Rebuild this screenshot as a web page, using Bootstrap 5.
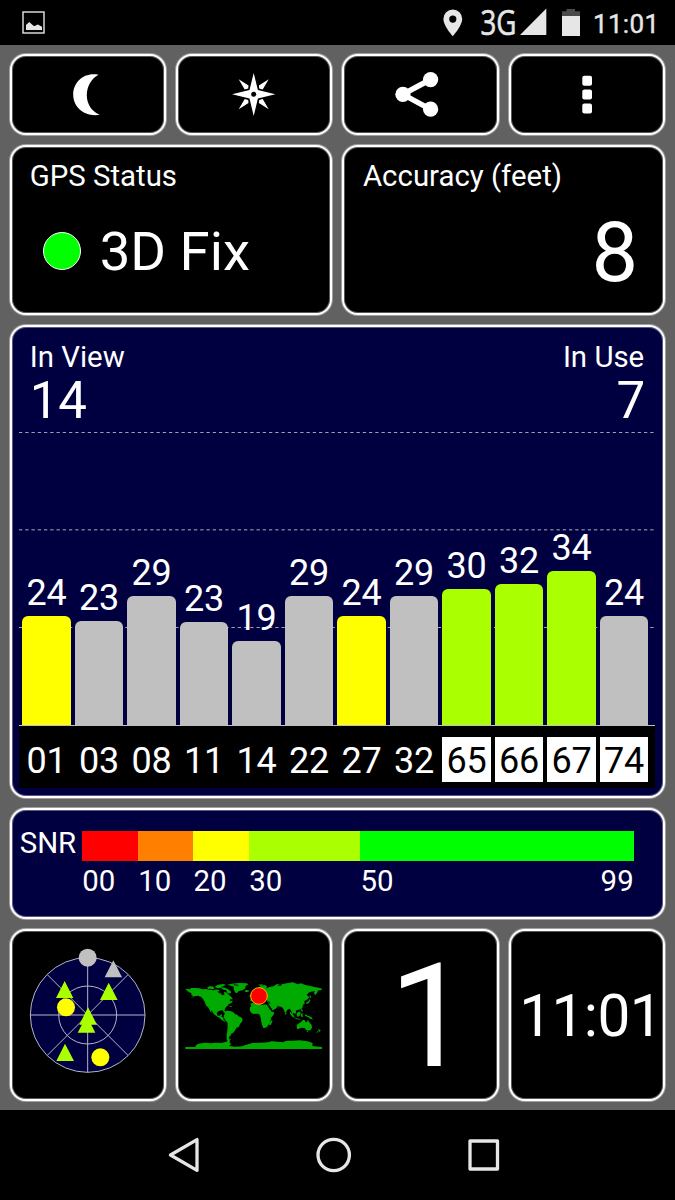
<!DOCTYPE html>
<html lang="en">
<head>
<meta charset="utf-8">
<meta name="viewport" content="width=device-width, initial-scale=1">
<title>GPS Status</title>
<link href="https://cdn.jsdelivr.net/npm/bootstrap@5.3.0/dist/css/bootstrap.min.css" rel="stylesheet">
<style>
  body { font-family: Roboto, "Liberation Sans", sans-serif; background: #000; color: #fff; height: 1200px; overflow: hidden; }
  svg { display: block; }
  .status-bar { height: 45px; }
  .panel-area { height: 1065px; padding: 9px 9.8px 0 9.7px; background: #616161; }
  .panel-area .row { --bs-gutter-x: 10px; margin-bottom: 10px; }
  .panel-area .row > * { height: 100%; }
  .tile { height: 100%; background: #000; border: 2px solid #fff; border-radius: 16px; box-shadow: 0 0 0 1px rgba(255,255,255,.4), inset 0 0 0 1px rgba(255,255,255,.35); overflow: hidden; }
  .tile-navy { background: #000040; }
  .h-tools { height: 80.5px; }
  .h-info { height: 170.5px; }
  .h-chart { height: 473px; }
  .h-snr { height: 111px; }
  .h-foot { height: 171.5px; }
  .caption-text { font-size: 29.4px; line-height: 40px; white-space: nowrap; }
  .fix-text { font-size: 54.5px; line-height: 70px; white-space: nowrap; }
  .fix-dot { width: 38px; height: 38px; border: 1.5px solid #fff; border-radius: 50%; background: #0f0; }
  .accuracy-text { font-size: 83px; line-height: 90px; padding-right: 25px; }
  .count-text { font-size: 51px; line-height: 50px; }
  .plot { height: 293px; margin: 0 8px 0 7px; }
  .plot-grid { left: 0; top: 0; }
  .bars { height: 293px; padding-left: 3.7px; gap: 4px; }
  .sat { width: 48.5px; flex: none; }
  .sat-value { font-size: 36px; line-height: 46px; }
  .sat-bar { border-radius: 6px 6px 0 0; }
  .weak { background: #c0c0c0; } .fair { background: #ff0; } .good { background: #af0; }
  .sat-names { height: 63px; margin: 0 8px 0 7px; padding: 11px 0 0 3.7px; gap: 4px; background: #000; border-top: 1px solid #c0c0c0; }
  .sat-name { width: 48.5px; height: 45px; flex: none; font-size: 36px; line-height: 48px; }
  .used { background: #fff; color: #000; }
  .snr-label { width: 62.5px; margin-left: 8px; font-size: 29.4px; line-height: 30px; margin-top: -3px; }
  .snr-scale { width: 551.5px; }
  .snr-scale > div > div { flex: none; }
  .snr-color { height: 30px; }
  .big-digit { font-size: 145px; line-height: 171px; padding-left: 18px; }
  .clock-text { font-size: 58.5px; line-height: 171px; letter-spacing: -.6px; white-space: nowrap; }
  .nav-keys { height: 90px; }
</style>
</head>
<body>
<header class="status-bar">
  <svg width="675" height="45" viewBox="0 0 675 45">
    <rect x="23" y="12" width="21" height="21" fill="none" stroke="#e6e6e6" stroke-width="1.400"/>
    <path fill="#e6e6e6" d="M26 30V25l3.200-3 4.300 3.700 1.200.2 3-1.500 4.300 2.400V30z"/>
    <path fill="#e6e6e6" fill-rule="evenodd" d="M452.800 9.500a9.400 9.400 0 0 0-9.400 9.500c0 6.800 9.400 17.200 9.400 17.200s9.400-10.400 9.400-17.200a9.400 9.400 0 0 0-9.400-9.500zm0 6a3.600 3.600 0 1 1 0 7.200 3.600 3.600 0 0 1 0-7.200z"/>
    <text x="480.500" y="35.300" font-family="Open Sans, sans-serif" font-size="34" fill="#e6e6e6" stroke="#e6e6e6" stroke-width=".6" textLength="36" lengthAdjust="spacingAndGlyphs">3G</text>
    <path fill="#e6e6e6" d="M520 35L546.300 8.500V35z"/>
    <path fill="#4a4a4a" d="M562 11.300h4.500V9h8.500v2.300h5V17h-18z"/>
    <path fill="#e6e6e6" d="M562 16h18v20h-18z"/>
    <text x="593" y="32.500" font-size="26" fill="#e6e6e6" stroke="#e6e6e6" stroke-width=".4" textLength="66">11:01</text>
  </svg>
</header>

<main class="panel-area">
  <div class="row h-tools">
    <div class="col-3"><div class="tile">
      <svg width="152" height="76" viewBox="12 56 152 76"><path fill="#fff" d="M98.500 74.700C84 71.800 73.200 82 73.200 94.500c0 13 11.800 22.800 26.500 20.300C82.500 107.500 83 83 98.500 74.700z"/></svg>
    </div></div>
    <div class="col-3"><div class="tile">
      <svg width="152" height="76" viewBox="178 56 152 76">
        <g fill="#fff">
          <path d="M253.700 73l4.200 17 17.400 4.300-17.400 4.200-4.200 17.500-4.200-17.500-17.500-4.200 17.500-4.300z"/>
          <path d="M238.700 79.300l9.800 6.200-.3 3-3.500 1zM268.700 79.300l-9.800 6.200.3 3 3.500 1zM238.700 109.300l9.800-6.200-.3-3-3.500-1zM268.700 109.300l-9.800-6.200.3-3 3.500-1z"/>
        </g>
        <circle cx="253.700" cy="94.300" r="2.500"/>
      </svg>
    </div></div>
    <div class="col-3"><div class="tile">
      <svg width="152" height="76" viewBox="344.700 56 152 76"><path d="M431.300 79.500L403.500 94.300l27.800 15" fill="none" stroke="#fff" stroke-width="5.400"/><g fill="#fff"><circle cx="431.300" cy="79.600" r="7.600"/><circle cx="403.600" cy="94.300" r="7.600"/><circle cx="431.300" cy="109.200" r="7.600"/></g></svg>
    </div></div>
    <div class="col-3"><div class="tile">
      <svg width="152" height="76" viewBox="511 56 152 76" fill="#fff"><rect x="582.300" y="75.700" width="9.700" height="10" rx="2"/><rect x="582.300" y="89.600" width="9.700" height="10" rx="2"/><rect x="582.300" y="103.600" width="9.700" height="10" rx="2"/></svg>
    </div></div>
  </div>

  <div class="row h-info">
    <div class="col-6"><div class="tile">
      <div class="caption-text" style="padding:9px 0 0 18px">GPS Status</div>
      <div class="d-flex align-items-center" style="padding:20px 0 0 31px">
        <span class="fix-dot"></span><span class="fix-text" style="margin-left:19px">3D Fix</span>
      </div>
    </div></div>
    <div class="col-6"><div class="tile">
      <div class="caption-text" style="padding:9px 0 0 18.500px">Accuracy (feet)</div>
      <div class="accuracy-text text-end" style="padding-top:12px">8</div>
    </div></div>
  </div>

  <div class="row h-chart">
    <div class="col-12"><div class="tile tile-navy">
      <div class="d-flex justify-content-between caption-text" style="padding:10px 19px 0 18px"><span>In View</span><span>In Use</span></div>
      <div class="d-flex justify-content-between count-text" style="padding:0 18px"><span style="margin-top:-1px">14</span><span style="margin-top:-1px">7</span></div>
      <div class="plot position-relative" style="margin-top:6px">
        <svg class="plot-grid position-absolute" width="637" height="293" fill="none" stroke="#fff" stroke-dasharray="3.300 2.950">
          <path d="M0 .500H636M0 195.500H636" stroke-opacity=".62"/><path d="M0 97.700H636" stroke-width="1.500" stroke-opacity=".45"/>
        </svg>
        <div class="bars d-flex align-items-end position-relative text-center" id="bars"></div>
      </div>
      <div class="sat-names d-flex text-center" id="names"></div>
    </div></div>
  </div>

  <div class="row h-snr">
    <div class="col-12"><div class="tile tile-navy d-flex" style="padding-top:21px">
      <div class="snr-label">SNR</div>
      <div class="snr-scale">
        <div class="d-flex" id="snrColors"></div>
        <div class="d-flex caption-text" id="snrTicks"></div>
      </div>
    </div></div>
  </div>

  <div class="row h-foot mb-0">
    <div class="col-3"><div class="tile">
      <svg width="152" height="167" viewBox="36 18 456 501">
        <circle cx="263" cy="270" r="172" fill="#000040"/>
        <g fill="none" stroke="#b4b4c8" stroke-width="3"><circle cx="263" cy="270" r="172"/><circle cx="263" cy="270" r="87"/><path d="M91 270H435M263 98V442M142 149L384 391M384 149L142 391"/></g>
        <g fill="#c0c0c0"><circle cx="263" cy="98" r="27"/><path d="M340 106l26 51h-52z"/></g>
        <g fill="#af0"><path d="M194 168l26 51h-52zM326 173l27 52h-53zM260 272l26 51h-53zM264 247l27 52h-53zM195 356l27 52h-53z"/></g>
        <g fill="#ff0"><circle cx="198" cy="247" r="27"/><circle cx="301" cy="397" r="27"/></g>
      </svg>
    </div></div>
    <div class="col-3"><div class="tile">
      <svg width="152" height="167" viewBox="9 -117 456 501">
        <g fill="#0a0">
          <path d="M30 56l14 2 5-4 12 0 12 1 10 3 12-1 8 3 14 0 10-3 7 3-4 7 8 2 3 7 7-2-1-9 9 3 7 8 6 5 5 7-9 0 0 6 9-2-4 6-9 5-6 6-5 7-1 5 2 8-4-1-4-7-9 1-6 3-3 6 3 6 7 0 3-4 4 1-3 7 6 1 1 9 6 1-3 3-8-4-7-7-9-5-8-6-6-10-4-2 4 9-5-5-5-11-8-8-5-12-4-7-6-7-10-3-10 2-11 6 8-7-6-3 0-6-7-2z"/>
          <path d="M96 53l9-5 10 2 4 5-10 4-8-1zM119 51l8-6 16-3 10 2-8 5-9 3 14 1 12 6 7 7-4 5-8-3-4-8-8-1-8-5-9 1zM157 44l14-3 21-2 23 1 5 3-8 5-1 7-8 6-11 2-7 7-5-3-4-9 0-8-8-3-10-2zM209 62l5-2 7 1 1 3-6 3-6-2z"/>
          <path d="M145 103l10 1 8 4-8-1-10-2zM164 108l8 1-3 2-6-1zM148 125l7-3 11 1 8 3 7 7 6 1 3 5 7 2 6 6-2 8-6 7-3 8-8 4-5 9-5 6-5 2-3 7-4 2 1 5-3 7 6 2-4 1-7-6 0-14 2-14 1-14-1-10-5-5-5-9-1-6 3-5 1-6z"/>
          <path d="M226 101l8-3 12-1 6 1 2 5 8 2 8-2 9 2 4 7 5 11 6 4 4-1-2 8-8 9-1 10-4 7-5 9-6 4-7 1-3-7-3-10-1-9-3-11-3-5-8-1-10 1-7-5-3-7 1-8 4-4z"/>
          <path d="M284 157l7-7 1 4-4 10-4 2-2-4zM226 94l1-10 8-1 0-5-5-3 8-3 7-5 4-4-1-5 8-9 12-4 8 3-2 7 9-4 12-2 5-3 18 1 2-4 19-4 15-2 14 6 10-3 11 4 14 3 15 4 14 2 9 3-2 5-9 0-4 8-6 7-3-8 3-5-12 2-7 3-6 7 8 7-7 7-8 4 1 9-5 2-1 8-7 6-9 3-5 1 2 5-4 6-4-5-3 3 4 9-4-3-3-10-3-8-4-3-7 5-3 8-4-3-4-10-5-5-10-2-3-3 1 4-7 7-8 4-6-9-6-10 0-5-5 0 1-6-8-1-7 2-5-4-5-4-6 4-5-1-5 6zM220 77l5 0 3-9 3 4 4 7-8 3z"/>
          <path d="M249 44l13-1 3 3-9 2zM299 46l8-4 8 0-7 3-3 5zM331 127l4 4-2 3-3-3zM344 124l8 8 6 9 2 4-8-5-7-9zM360 144l16 3-2 2-12-2zM365 130l8-6 4 5-4 10-7 1zM377 131l9-1-4 4 3 8-5-3-2 4zM378 114l5 7-1 6-4-6zM390 133l9 4 10 4 5 8-8-3-7-4-9-5zM393 98l8-5 3-6 2 4-4 8-8 3zM404 74l4 5-1 6-3-3z"/>
          <path d="M366 164l6-4 6-4 5-6 6 0 2 5 5 2 2-8 6 9 6 7 1 8-4 7-8 2-6-2-4-6-9-1-13 5-2-7zM394 184l5-1-2 5zM429 177l8 4-3 5-4-3 1-2zM428 183l2 3-6 4 2-5z"/>
          <path d="M31 231l31 0-1-4 9-6 21-3 17 2 14-2 17 1 16-4 6-7 7-1-4 5 0 6 5 5-8 4 18 3 22-1 13-5 18-5 27-1 20-1 11-3 20 1 13 2 12-5 20 0 17-1 22 2 11 3 8 4-1 8L441 231v6H31z"/>
        </g>
        <path fill="none" stroke="#000" stroke-width="2.500" d="M252 94l10-2 12 5 6-1M276 103l9 15M281 94l4 7M128 64l6 5 9-1M118 53l9 5 13 0M103 57l14 3M176 44l14 2"/>
        <circle cx="252" cy="78" r="25" fill="red" stroke="#ffb000" stroke-width="3"/>
      </svg>
    </div></div>
    <div class="col-3"><div class="tile text-center big-digit">1</div></div>
    <div class="col-3"><div class="tile clock-text" style="padding-left:8.500px">11:01</div></div>
  </div>
</main>

<nav class="nav-keys">
  <svg width="675" height="90" viewBox="0 1110 675 90" fill="none" stroke="#e6e6e6" stroke-width="3.300" stroke-linejoin="round">
    <path d="M197 1139.600v30.800L170.500 1155z"/>
    <circle cx="333.700" cy="1155" r="15.700"/>
    <rect x="470" y="1141" width="27.500" height="28"/>
  </svg>
</nav>

<script src="https://cdn.jsdelivr.net/npm/bootstrap@5.3.0/dist/js/bootstrap.bundle.min.js"></script>
<script>
  // id, SNR value, bar height, colour class, used in fix
  const sats = [
    ["01", 24, 109.5, "fair", 0], ["03", 23, 104.5, "weak", 0], ["08", 29, 129, "weak", 0], ["11", 23, 103, "weak", 0],
    ["14", 19, 84.5, "weak", 0], ["22", 29, 129, "weak", 0], ["27", 24, 108.7, "fair", 0], ["32", 29, 129.3, "weak", 0],
    ["65", 30, 136.3, "good", 1], ["66", 32, 141.3, "good", 1], ["67", 34, 154, "good", 1], ["74", 24, 108.7, "weak", 1]
  ];
  document.getElementById("bars").innerHTML = sats.map(s =>
    `<div class="sat"><div class="sat-value">${s[1]}</div><div class="sat-bar ${s[3]}" style="height:${s[2]}px"></div></div>`).join("");
  document.getElementById("names").innerHTML = sats.map(s =>
    `<div class="sat-name ${s[4] ? "used" : ""}">${s[0]}</div>`).join("");
  const scale = [["00", 56, "#f00"], ["10", 55.3, "#ff8000"], ["20", 55.7, "#ff0"], ["30", 111.3, "#af0"], ["50", 273.2, "#0f0"]];
  document.getElementById("snrColors").innerHTML = scale.map(s =>
    `<div class="snr-color" style="width:${s[1]}px;background:${s[2]}"></div>`).join("");
  document.getElementById("snrTicks").innerHTML = scale.map((s, i) =>
    `<div class="d-flex justify-content-between" style="width:${s[1]}px"><span class="ms-${i ? 0 : 0}">${s[0]}</span>${i === 4 ? "<span>99</span>" : ""}</div>`).join("");
</script>
</body>
</html>
